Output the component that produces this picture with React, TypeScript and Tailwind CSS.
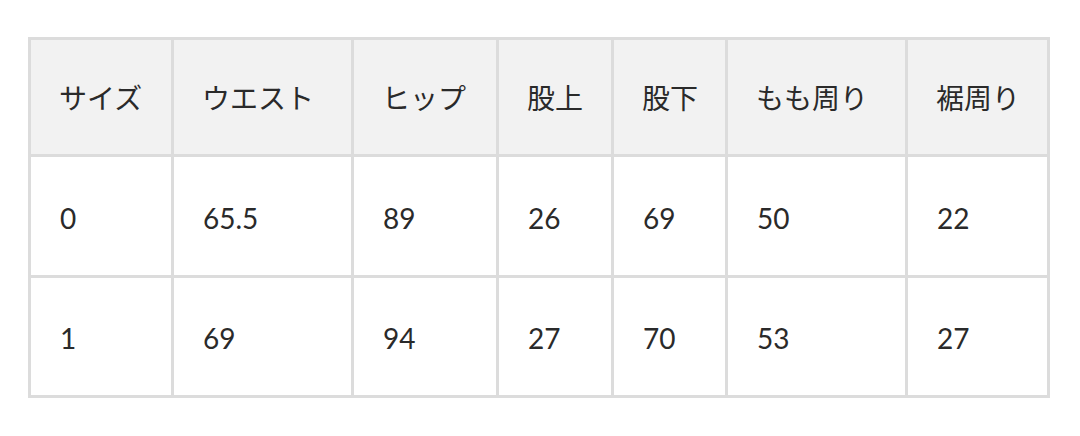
import React from "react";

const headers = ["サイズ", "ウエスト", "ヒップ", "股上", "股下", "もも周り", "裾周り"];
const rows = [
  ["0", "65.5", "89", "26", "69", "50", "22"],
  ["1", "69", "94", "27", "70", "53", "27"],
];

export default function App() {
  return (
    <div className="w-[1080px] h-[436px] bg-white pt-[37px] pl-[28px]" style={{ fontFamily: 'Lato, "Noto Sans CJK JP", sans-serif' }}>
      <div className="grid w-[1022px] grid-cols-[140px_177px_142px_112px_111px_177px_139px] grid-rows-[114px_118px_117px] gap-[3px] bg-[#dcdcdc] p-[3px] text-[28px] text-[#2a2a2a]">
        {headers.map((h) => (
          <div key={h} className="flex items-center bg-[#f2f2f2] pl-[28px] pt-[2px]">
            {h}
          </div>
        ))}
        {rows.map((r, i) =>
          r.map((c, j) => (
            <div key={`${i}-${j}`} className="flex items-center bg-white pl-[29px] pt-[3px]">
              {c}
            </div>
          ))
        )}
      </div>
    </div>
  );
}
